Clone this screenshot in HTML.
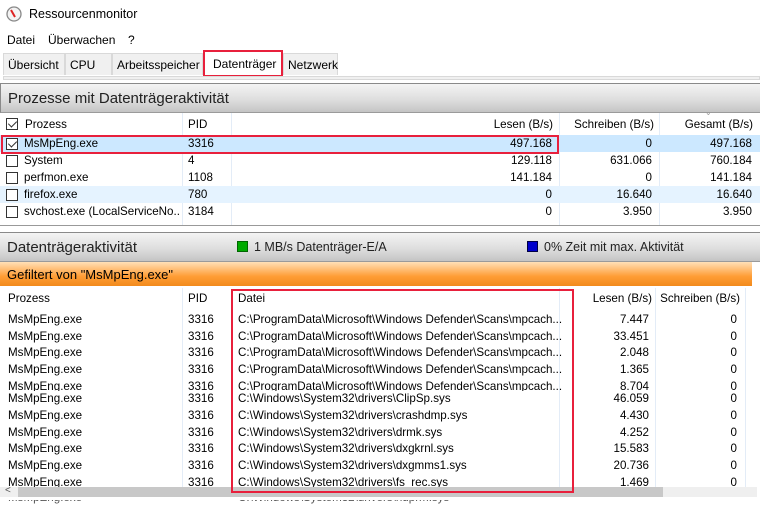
<!DOCTYPE html>
<html><head><meta charset="utf-8"><style>
*{margin:0;padding:0;box-sizing:border-box}
body{width:760px;height:505px;overflow:hidden;background:#fff;font-family:"Liberation Sans",sans-serif;font-size:11.6px;color:#000;position:relative}
.a{position:absolute;white-space:nowrap}
.r{text-align:right}
.hdr{position:absolute;left:0;width:760px;background:linear-gradient(#f4f4f4,#dcdcdc 60%,#c4c4c4);border-top:1px solid #8a8a8a;border-bottom:1px solid #9a9a9a;font-size:15px;color:#222}
.sep{position:absolute;width:1px;background:#e3ecf7}
.cb{position:absolute;width:12px;height:12px;border:1px solid #333;background:#fff}
.ck::after{content:"";position:absolute;left:3px;top:0px;width:4px;height:7px;border:solid #333;border-width:0 1.5px 1.5px 0;transform:rotate(45deg)}
.tab{position:absolute;top:53px;height:22px;border:1px solid #d9d9d9;border-bottom:none;background:#f0f0f0;font-size:12px;padding:4px 4px 0}
.clip{position:absolute;left:0;width:760px;overflow:hidden}
</style></head><body>
<svg class="a" style="left:6px;top:6px" width="16" height="16" viewBox="0 0 16 16"><circle cx="8" cy="8" r="7" fill="#f3f3f3" stroke="#888" stroke-width="1.3"/><path d="M5 4 L9 11" stroke="#d22" stroke-width="2"/></svg>
<div class="a" style="left:29px;top:7px;font-size:12.5px">Ressourcenmonitor</div>
<div class="a" style="left:7px;top:33px;font-size:12px">Datei</div>
<div class="a" style="left:48px;top:33px;font-size:12px">Überwachen</div>
<div class="a" style="left:128px;top:33px;font-size:12px">?</div>
<div style="position:absolute;left:0;top:53px;width:760px;height:23px;background:#fff"></div>
<div class="tab" style="left:3px;width:62px">Übersicht</div>
<div class="tab" style="left:65px;width:47px">CPU</div>
<div class="tab" style="left:112px;width:91px">Arbeitsspeicher</div>
<div class="a" style="left:203px;top:50px;width:80px;height:27px;border:2px solid #e8203c;background:#fff;padding:5px 0 0 8px;font-size:12px">Datenträger</div>
<div class="tab" style="left:283px;width:55px">Netzwerk</div>
<div style="position:absolute;left:3px;top:76px;width:757px;height:4px;border:1px solid #d9d9d9;background:#f0f0f0"></div>
<div class="hdr" style="top:83px;height:30px;border-left:1px solid #8a8a8a"><span class="a" style="left:7px;top:6px">Prozesse mit Datenträgeraktivität</span></div>
<div class="sep" style="left:182px;top:113px;height:113px"></div>
<div class="sep" style="left:231px;top:113px;height:113px"></div>
<div class="sep" style="left:559px;top:113px;height:113px"></div>
<div class="sep" style="left:659px;top:113px;height:113px"></div>
<div class="cb ck" style="left:6px;top:118px"></div>
<div class="a" style="left:25px;top:118px">Prozess</div>
<div class="a" style="left:188px;top:118px">PID</div>
<div class="a r" style="right:207px;top:118px">Lesen (B/s)</div>
<div class="a r" style="right:106px;top:118px">Schreiben (B/s)</div>
<div class="a r" style="right:7px;top:118px">Gesamt (B/s)</div>
<div class="a" style="left:705px;top:108px;font-size:8px;color:#999">⌄</div>
<div style="position:absolute;left:0;top:135px;width:760px;height:17px;background:#cce8ff"></div>
<div style="position:absolute;left:0;top:186px;width:760px;height:17px;background:#e5f3ff"></div>
<div class="cb ck" style="left:6px;top:138px"></div>
<div class="a" style="left:24px;top:137px">MsMpEng.exe</div><div class="a" style="left:188px;top:137px">3316</div><div class="a r" style="right:208px;top:137px">497.168</div><div class="a r" style="right:108px;top:137px">0</div><div class="a r" style="right:8px;top:137px">497.168</div>
<div class="cb" style="left:6px;top:155px"></div>
<div class="a" style="left:24px;top:154px">System</div><div class="a" style="left:188px;top:154px">4</div><div class="a r" style="right:208px;top:154px">129.118</div><div class="a r" style="right:108px;top:154px">631.066</div><div class="a r" style="right:8px;top:154px">760.184</div>
<div class="cb" style="left:6px;top:172px"></div>
<div class="a" style="left:24px;top:171px">perfmon.exe</div><div class="a" style="left:188px;top:171px">1108</div><div class="a r" style="right:208px;top:171px">141.184</div><div class="a r" style="right:108px;top:171px">0</div><div class="a r" style="right:8px;top:171px">141.184</div>
<div class="cb" style="left:6px;top:189px"></div>
<div class="a" style="left:24px;top:188px">firefox.exe</div><div class="a" style="left:188px;top:188px">780</div><div class="a r" style="right:208px;top:188px">0</div><div class="a r" style="right:108px;top:188px">16.640</div><div class="a r" style="right:8px;top:188px">16.640</div>
<div class="cb" style="left:6px;top:206px"></div>
<div class="a" style="left:24px;top:205px;width:156px;overflow:hidden">svchost.exe (LocalServiceNo...</div><div class="a" style="left:188px;top:205px">3184</div><div class="a r" style="right:208px;top:205px">0</div><div class="a r" style="right:108px;top:205px">3.950</div><div class="a r" style="right:8px;top:205px">3.950</div>
<div style="position:absolute;left:1px;top:135px;width:558px;height:19px;border:2px solid #e8203c"></div>
<div style="position:absolute;left:0;top:225px;width:760px;height:1px;background:#999"></div>
<div class="hdr" style="top:232px;height:30px"><span class="a" style="left:7px;top:6px">Datenträgeraktivität</span>
<span class="a" style="left:237px;top:8px;width:11px;height:11px;background:#0a0;border:1px solid #060"></span><span class="a" style="left:254px;top:7px;font-size:12.5px">1 MB/s Datenträger-E/A</span>
<span class="a" style="left:527px;top:8px;width:11px;height:11px;background:#00c;border:1px solid #004"></span><span class="a" style="left:544px;top:7px;font-size:12.5px">0% Zeit mit max. Aktivität</span></div>
<div class="a" style="left:0;top:262px;width:752px;height:24px;background:linear-gradient(#ffe0b8,#ff9d35 60%,#f28a1c);padding:5px 0 0 7px;font-size:13px">Gefiltert von "MsMpEng.exe"</div>
<div class="sep" style="left:182px;top:288px;height:200px"></div>
<div class="sep" style="left:559px;top:288px;height:200px"></div>
<div class="sep" style="left:655px;top:288px;height:200px"></div>
<div class="sep" style="left:745px;top:288px;height:200px"></div>
<div class="a" style="left:8px;top:292px">Prozess</div><div class="a" style="left:188px;top:292px">PID</div><div class="a" style="left:238px;top:292px">Datei</div>
<div class="a r" style="right:108px;top:292px">Lesen (B/s)</div><div class="a r" style="right:20px;top:292px">Schreiben (B/s)</div>
<div class="clip" style="top:311px;height:80px">
<div class="a" style="left:8px;top:1px;line-height:16.7px">MsMpEng.exe<br>MsMpEng.exe<br>MsMpEng.exe<br>MsMpEng.exe<br>MsMpEng.exe</div>
<div class="a" style="left:188px;top:1px;line-height:16.7px">3316<br>3316<br>3316<br>3316<br>3316</div>
<div class="a" style="left:238px;top:1px;line-height:16.7px">C:\ProgramData\Microsoft\Windows Defender\Scans\mpcach...<br>C:\ProgramData\Microsoft\Windows Defender\Scans\mpcach...<br>C:\ProgramData\Microsoft\Windows Defender\Scans\mpcach...<br>C:\ProgramData\Microsoft\Windows Defender\Scans\mpcach...<br>C:\ProgramData\Microsoft\Windows Defender\Scans\mpcach...</div>
<div class="a r" style="right:111px;top:1px;line-height:16.7px">7.447<br>33.451<br>2.048<br>1.365<br>8.704</div>
<div class="a r" style="right:23px;top:1px;line-height:16.7px">0<br>0<br>0<br>0<br>0</div>
</div>
<div class="clip" style="top:391px;height:96px">
<div class="a" style="left:8px;top:0;line-height:16.8px">MsMpEng.exe<br>MsMpEng.exe<br>MsMpEng.exe<br>MsMpEng.exe<br>MsMpEng.exe<br>MsMpEng.exe</div>
<div class="a" style="left:188px;top:0;line-height:16.8px">3316<br>3316<br>3316<br>3316<br>3316<br>3316</div>
<div class="a" style="left:238px;top:0;line-height:16.8px">C:\Windows\System32\drivers\ClipSp.sys<br>C:\Windows\System32\drivers\crashdmp.sys<br>C:\Windows\System32\drivers\drmk.sys<br>C:\Windows\System32\drivers\dxgkrnl.sys<br>C:\Windows\System32\drivers\dxgmms1.sys<br>C:\Windows\System32\drivers\fs_rec.sys</div>
<div class="a r" style="right:111px;top:0;line-height:16.8px">46.059<br>4.430<br>4.252<br>15.583<br>20.736<br>1.469</div>
<div class="a r" style="right:23px;top:0;line-height:16.8px">0<br>0<br>0<br>0<br>0<br>0</div>
</div>
<div style="position:absolute;left:0;top:487px;width:757px;height:10px;background:#efefef"></div>
<div style="position:absolute;left:18px;top:487px;width:645px;height:10px;background:#c8c8c8"></div>
<div class="a" style="left:5px;top:485px;font-size:10px;color:#555">&lt;</div>
<div style="position:absolute;left:231px;top:289px;width:343px;height:204px;border:2px solid #e8203c"></div>
<div class="clip" style="top:500px;height:5px"><div class="a" style="left:8px;top:-9px;color:#555">MsMpEng.exe</div><div class="a" style="left:238px;top:-9px;color:#555">C:\Windows\System32\drivers\ndprm.sys</div></div>
</body></html>
